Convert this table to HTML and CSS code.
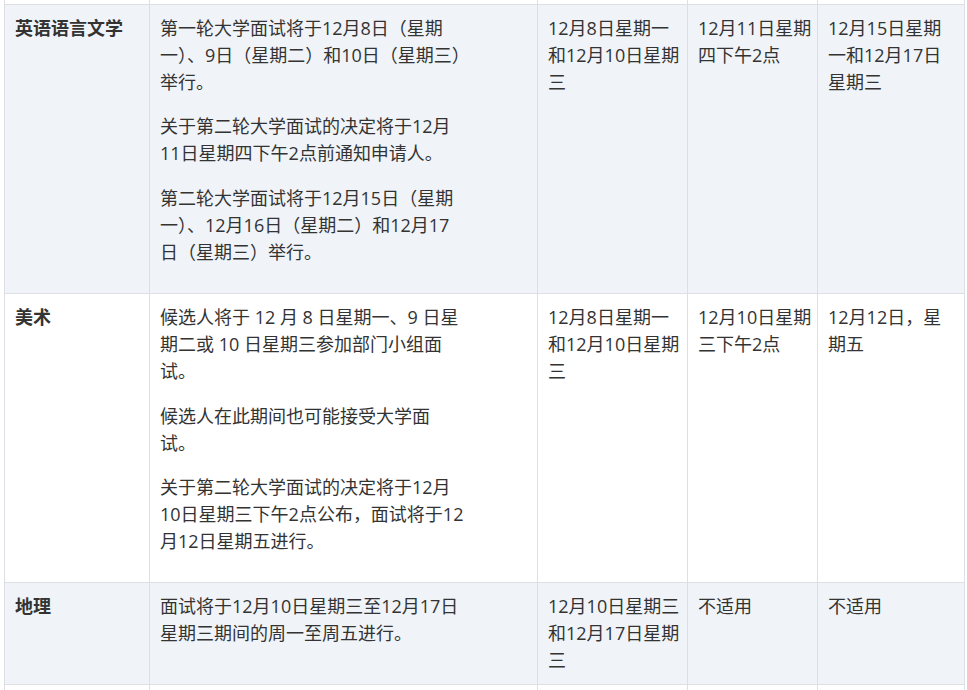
FILE: index.html
```html
<!DOCTYPE html>
<html lang="zh-CN">
<head>
<meta charset="utf-8">
<title>面试日期</title>
<link rel="stylesheet" href="styles.css">
</head>
<body>
<div class="wrap">
<table class="schedule">
  <colgroup>
    <col class="c-subject">
    <col class="c-detail">
    <col class="c-dates">
    <col class="c-notify">
    <col class="c-second">
  </colgroup>
  <tbody>
    <tr class="spacer"><td></td><td></td><td></td><td></td><td></td></tr>
    <tr class="alt">
      <td class="subject">英语语言文学</td>
      <td class="detail">
        <p>第一轮大学面试将于12月8日（星期<br>一）、9日（星期二）和10日（星期三）<br>举行。</p>
        <p>关于第二轮大学面试的决定将于12月<br>11日星期四下午2点前通知申请人。</p>
        <p>第二轮大学面试将于12月15日（星期<br>一）、12月16日（星期二）和12月17<br>日（星期三）举行。</p>
      </td>
      <td class="short">12月8日星期一<br>和12月10日星期<br>三</td>
      <td class="short">12月11日星期<br>四下午2点</td>
      <td class="short">12月15日星期<br>一和12月17日<br>星期三</td>
    </tr>
    <tr>
      <td class="subject">美术</td>
      <td class="detail">
        <p>候选人将于 12 月 8 日星期一、9 日星<br>期二或 10 日星期三参加部门小组面<br>试。</p>
        <p>候选人在此期间也可能接受大学面<br>试。</p>
        <p>关于第二轮大学面试的决定将于12月<br>10日星期三下午2点公布，面试将于12<br>月12日星期五进行。</p>
      </td>
      <td class="short">12月8日星期一<br>和12月10日星期<br>三</td>
      <td class="short">12月10日星期<br>三下午2点</td>
      <td class="short">12月12日，星<br>期五</td>
    </tr>
    <tr class="alt">
      <td class="subject">地理</td>
      <td class="detail">
        <p>面试将于12月10日星期三至12月17日<br>星期三期间的周一至周五进行。</p>
      </td>
      <td class="short">12月10日星期三<br>和12月17日星期<br>三</td>
      <td class="short">不适用</td>
      <td class="short">不适用</td>
    </tr>
    <tr class="tail"><td></td><td></td><td></td><td></td><td></td></tr>
  </tbody>
</table>
</div>
</body>
</html>
```

FILE: styles.css
```css
html, body {
  margin: 0;
  padding: 0;
  background: #ffffff;
  overflow: hidden;
}
.wrap {
  padding-left: 4px;
}
.schedule {
  border-collapse: collapse;
  table-layout: fixed;
  width: 960px;
  font-family: "Open Sans", "Noto Sans CJK SC", sans-serif;
  font-size: 18px;
  line-height: 27px;
  color: #333333;
}
.c-subject { width: 145px; }
.c-detail { width: 388px; }
.c-dates { width: 150px; }
.c-notify { width: 130px; }
.c-second { width: 147px; }
.schedule td {
  border: 1px solid #dcdfe3;
  padding: 10px;
  vertical-align: top;
  text-align: left;
}
.schedule tr.alt td {
  background: #f0f4f8;
}
.schedule tr.spacer td {
  border-top: none;
  padding: 0;
  height: 4px;
}
.schedule tr.tail td {
  padding: 0;
  height: 40px;
}
.subject {
  font-weight: 700;
}
.short {
  white-space: nowrap;
}
.detail p {
  margin: 0 0 17.4px 0;
  white-space: nowrap;
}
```
